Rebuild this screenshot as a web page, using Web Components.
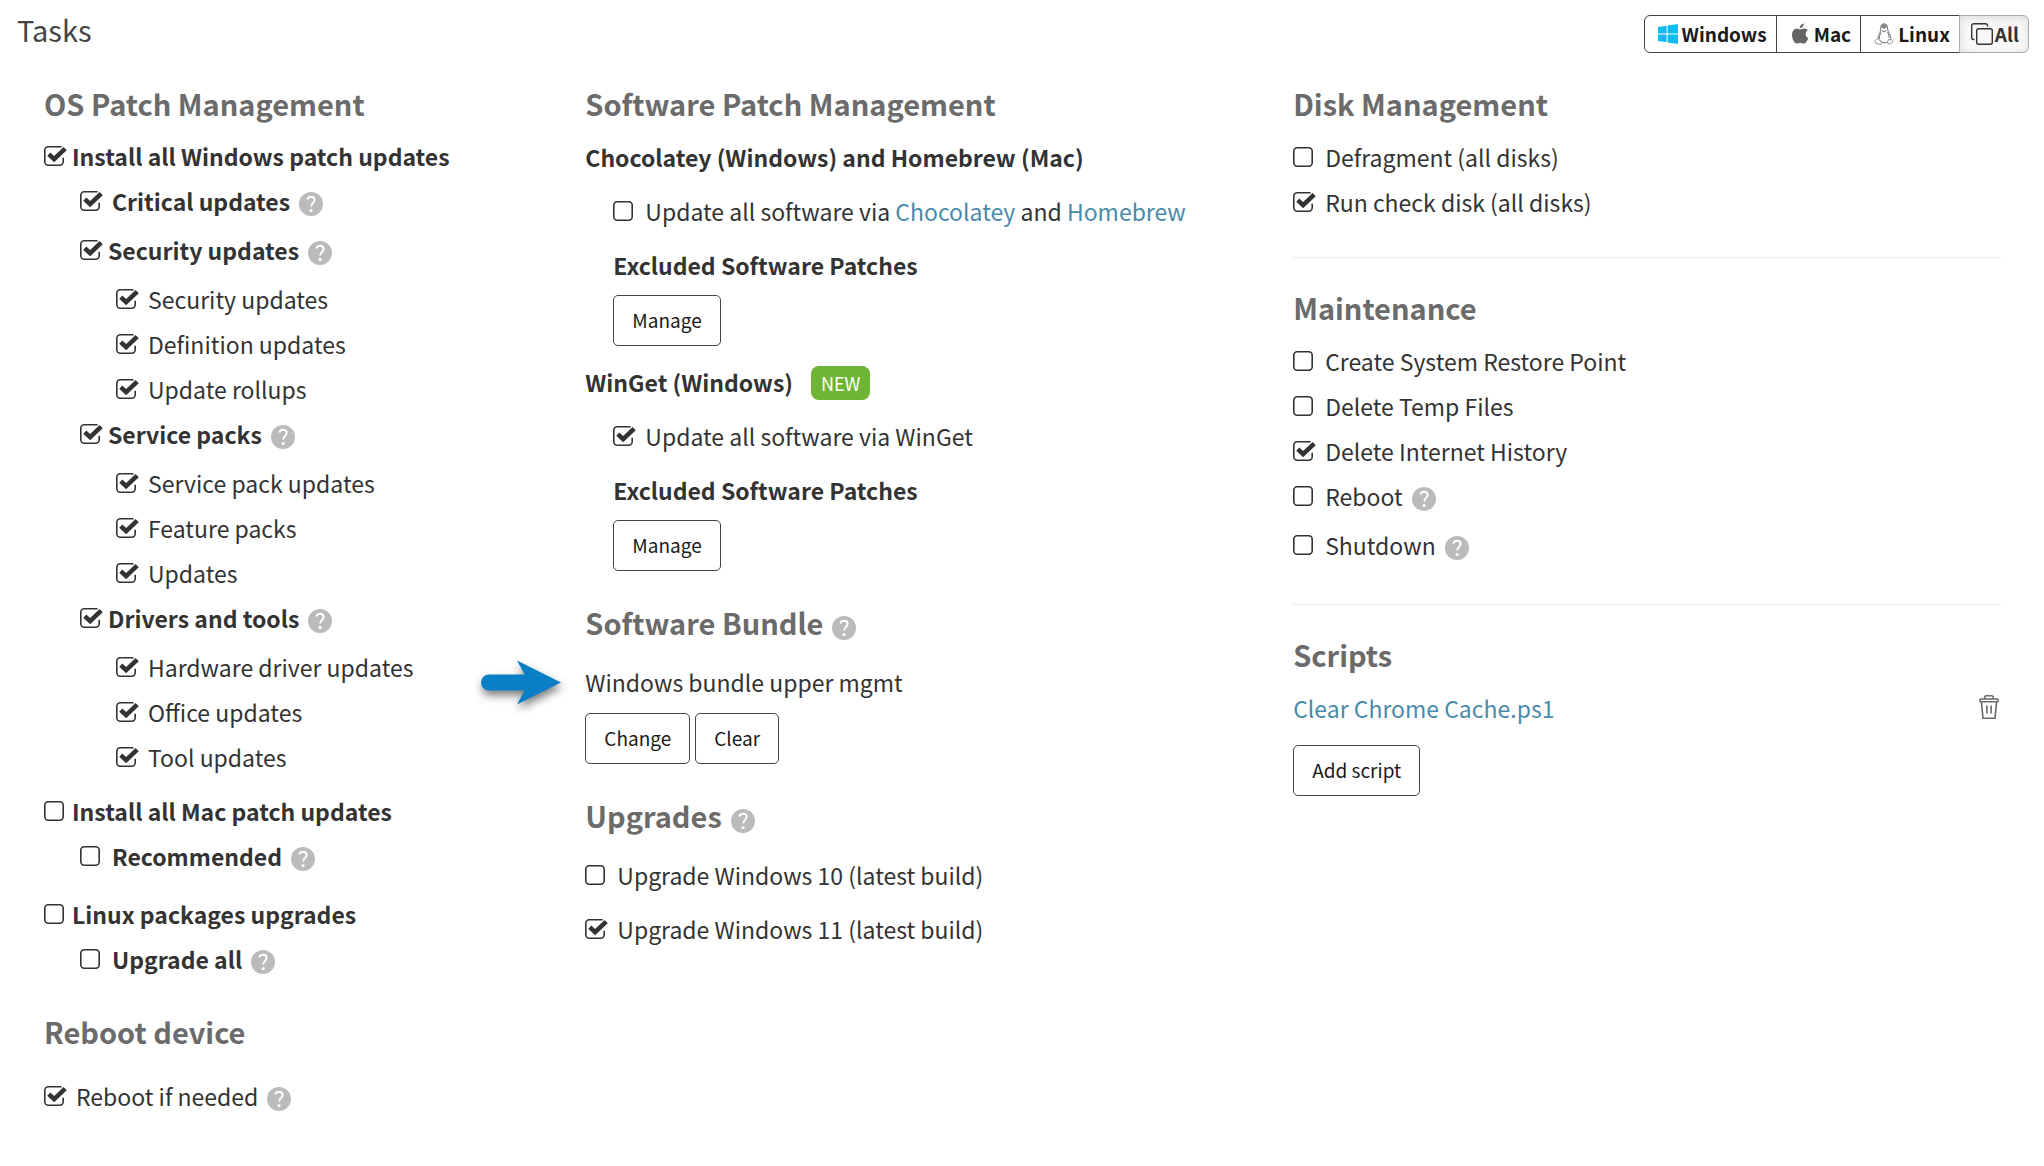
<!DOCTYPE html>
<html lang="en">
<head>
<meta charset="utf-8">
<meta name="viewport" content="width=device-width, initial-scale=1">
<title>Tasks</title>
<style>
    :root {
        --color-text: #333;
        --color-heading: #6b6b6b;
        --color-link: #4a8aaa;
        --color-line: #ebebeb;
        --font-size-sm: 18px;
        --font-size-md: 19px;
        --font-size-base: 23px;
        --font-size-xl: 29px;
        --row: 45px;
    }

    body {
        margin: 0;
        background: #fff;
        color: var(--color-text);
        font-family: "Noto Sans CJK JP", "Noto Sans CJK SC", sans-serif;
        font-size: var(--font-size-base);
        line-height: var(--row);
    }

    a {
        color: var(--color-link);
        text-decoration: none;
    }
</style>
</head>
<body>
<tasks-page></tasks-page>

<script>
class HelpIcon extends HTMLElement {
    connectedCallback() {
        const shadow = this.attachShadow({ mode: "open" });
        shadow.innerHTML = `
            <style>
                :host {
                    display: block;
                    flex: none;
                    margin-top: 13px;
                }

                button {
                    display: block;
                    width: 24px;
                    height: 24px;
                    padding: 0;
                    border: 0;
                    background: none;
                    cursor: pointer;
                }

                svg {
                    display: block;
                }
            </style>

            <button type="button" aria-label="Help">
                <svg width="24" height="24" viewBox="0 0 24 24" fill="none">
                    <circle cx="12" cy="12" r="12" fill="#bbb"/>
                    <path d="M8.3 7.6C8.8 5.6 10.2 4.8 12 4.8c2.1 0 3.6 1.2 3.6 3.2 0 2.7-3.4 3.1-3.4 6.6" stroke="#fff" stroke-width="2"/>
                    <circle cx="12.1" cy="18.6" r="1.6" fill="#fff"/>
                </svg>
            </button>
        `;
    }
}

class TaskCheck extends HTMLElement {
    connectedCallback() {
        const checked = this.hasAttribute("checked") ? "checked" : "";
        const help = this.hasAttribute("help") ? "<help-icon></help-icon>" : "";
        const shadow = this.attachShadow({ mode: "open" });
        shadow.innerHTML = `
            <style>
                :host {
                    display: flex;
                    gap: 9px;
                    min-height: var(--row);
                    --label-gap: 8px;
                }

                :host([help]) {
                    padding-bottom: 4px;
                }

                :host([strong]) {
                    font-weight: 700;
                }

                :host([tight]) {
                    --label-gap: 4px;
                }

                label {
                    display: flex;
                    gap: var(--label-gap);
                    cursor: pointer;
                }

                .box {
                    display: grid;
                    flex: none;
                    width: 24px;
                    height: 20px;
                    margin-top: 12px;
                }

                input,
                svg {
                    grid-area: 1 / 1;
                    width: 24px;
                    height: 20px;
                    margin: 0;
                }

                input {
                    appearance: none;
                }

                svg {
                    overflow: visible;
                    pointer-events: none;
                }

                .on,
                input:checked ~ .off {
                    display: none;
                }

                input:checked ~ .on {
                    display: block;
                }
            </style>

            <label>
                <span class="box">
                    <input type="checkbox" ${checked}>
                    <svg class="off" viewBox="0 0 24 20" fill="none" stroke="#333" stroke-width="1.6">
                        <rect x="0.8" y="0.8" width="18.4" height="18.4" rx="3.4"/>
                    </svg>
                    <svg class="on" viewBox="0 0 24 20" fill="none" stroke="#333">
                        <path d="M17.6.8H4.2A3.4 3.4 0 0 0 .8 4.2v11.6a3.4 3.4 0 0 0 3.4 3.4h11.6a3.4 3.4 0 0 0 3.4-3.4v-4" stroke-width="1.6"/>
                        <path d="M4.8 8.2l5.3 5L21.2 2.6" stroke-width="4.6"/>
                    </svg>
                </span>
                <span><slot></slot></span>
            </label>
            ${help}
        `;
    }
}

class TaskHeading extends HTMLElement {
    connectedCallback() {
        const help = this.hasAttribute("help") ? "<help-icon></help-icon>" : "";
        const shadow = this.attachShadow({ mode: "open" });
        shadow.innerHTML = `
            <style>
                :host {
                    display: flex;
                    gap: 9px;
                    margin-bottom: 9px;
                    color: var(--color-heading);
                }

                :host([help]) {
                    margin-bottom: 15px;
                }

                h2 {
                    margin: 0;
                    font-size: var(--font-size-xl);
                    font-weight: 700;
                }

                help-icon {
                    margin-top: 16px;
                }
            </style>

            <h2><slot></slot></h2>
            ${help}
        `;
    }
}

class TaskButton extends HTMLElement {
    connectedCallback() {
        const shadow = this.attachShadow({ mode: "open" });
        shadow.innerHTML = `
            <style>
                :host {
                    display: block;
                }

                button {
                    display: block;
                    height: 51px;
                    padding: 0 18px 2px;
                    border: 1px solid #444;
                    border-radius: 5px;
                    background: #fff;
                    color: #1a1a1a;
                    font-family: inherit;
                    font-size: var(--font-size-md);
                    cursor: pointer;
                }
            </style>

            <button type="button"><slot></slot></button>
        `;
    }
}

class PlatformFilter extends HTMLElement {
    connectedCallback() {
        const shadow = this.attachShadow({ mode: "open" });
        shadow.innerHTML = `
            <style>
                :host {
                    display: flex;
                    height: 38px;
                }

                button {
                    display: flex;
                    align-items: center;
                    gap: 4px;
                    margin-left: -1px;
                    padding: 0 9px 0 13px;
                    border: 1px solid #444;
                    background: #fff;
                    color: #1a1a1a;
                    font: inherit;
                    font-size: var(--font-size-md);
                    font-weight: 700;
                    line-height: 34px;
                    cursor: pointer;
                }

                button:first-of-type {
                    margin-left: 0;
                    border-radius: 6px 0 0 6px;
                }

                button:last-of-type {
                    gap: 2px;
                    padding-left: 11px;
                    border-color: #aaa;
                    border-radius: 0 6px 6px 0;
                    background: #f8f8f8;
                    box-shadow: inset 0 2px 8px rgba(0 0 0 / 0.12);
                    color: #333;
                }

                svg {
                    display: block;
                    flex: none;
                }
            </style>

            <button type="button">
                <svg width="20" height="20" viewBox="0 0 20 20" fill="#0fbcf0">
                    <path d="M0 3l8.6-1.2v7.7H0zM9.6 1.6L20 0v9.5H9.6zM0 10.5h8.6v7.7L0 17zM9.6 10.5H20V20L9.6 18.4z"/>
                </svg>
                Windows
            </button>
            <button type="button">
                <svg width="20" height="22" viewBox="0 0 20 22" fill="#666">
                    <path d="M13.7.5c.2 2.4-1.7 4.7-4 4.7C9.5 3 11.4.8 13.7.5z"/>
                    <path d="M10 6.5c1 0 2.3-1.1 4.2-1 1.3.1 2.7.7 3.5 1.9-3.1 2-2.6 6.2.6 7.5-.8 2.4-2.6 5.7-4.6 5.7-1.3 0-1.9-.8-3.4-.8s-2.2.8-3.4.8C4.5 20.6 2 16 2 12.3c0-4.2 2.4-6.7 4.9-6.8 1.3 0 2.3 1 3.1 1z"/>
                </svg>
                Mac
            </button>
            <button type="button">
                <svg width="20" height="22" viewBox="0 0 20 22" fill="none" stroke="#777">
                    <path d="M6.6 6.6C6.8 3 7.2.8 10 .8s3.5 2.3 3.6 5.2c.1 3 3.2 5.5 3.2 9.5l-1.2 2.3c-1.7 1.6-4.5 2.7-7.6 1.5L4 16c-.3-3.5 2.5-5.6 2.6-9.4z" fill="#fff"/>
                    <path d="M6.8 5C7 2.5 7.6.8 10 .8s3.2 1.7 3.4 4L12 4.5l-2 1.7L8 4.5z" fill="#888" stroke="none"/>
                    <path d="M7.7 7.5l2.3 1.2 2.5-1.2"/>
                    <path d="M7 9.500c-1 2-2 4-1.5 6.5M13.5 9c1 2 1.7 4 1.5 6"/>
                    <path d="M4 15.5l3.6 4c.2 1.6-1.2 2-2.6 1.6l-3.6-1c-1-.5.2-2 0-3.1 1 .1 1.600-1.500 2.600-1.500zM15 16c.8 1.200 1.800 1 2.500.4l1.700 2.100c-1.500.8-2.600 2.700-4 2.700-1.700 0-1.700-2-1.100-3.700z" fill="#fff" stroke-width=".8"/>
                </svg>
                Linux
            </button>
            <button type="button" aria-pressed="true">
                <svg width="22" height="22" viewBox="0 0 22 22" fill="none" stroke="#333" stroke-width="1.4">
                    <rect x="5.7" y="5.7" width="15.6" height="15.6" rx="2"/>
                    <path d="M16.5 3.500v-.8a2 2 0 0 0-2-2H2.700a2 2 0 0 0-2 2v11.800a2 2 0 0 0 2 2h.8"/>
                </svg>
                All
            </button>
        `;
    }
}

class OsPatchColumn extends HTMLElement {
    connectedCallback() {
        const shadow = this.attachShadow({ mode: "open" });
        shadow.innerHTML = `
            <style>
                :host {
                    display: block;
                }

                task-heading {
                    margin-bottom: 8px;
                }

                .group {
                    margin-bottom: 9px;
                }

                .indent {
                    padding-left: 36px;
                }

                .reboot {
                    margin-top: 23px;
                }

                .reboot task-heading {
                    margin-bottom: 20px;
                }
            </style>

            <task-heading>OS Patch Management</task-heading>
            <div class="group">
                <task-check checked strong tight>Install all Windows patch updates</task-check>
                <div class="indent">
                    <task-check checked strong help>Critical updates</task-check>
                    <task-check checked strong tight help>Security updates</task-check>
                    <div class="indent">
                        <task-check checked>Security updates</task-check>
                        <task-check checked>Definition updates</task-check>
                        <task-check checked>Update rollups</task-check>
                    </div>
                    <task-check checked strong tight help>Service packs</task-check>
                    <div class="indent">
                        <task-check checked>Service pack updates</task-check>
                        <task-check checked>Feature packs</task-check>
                        <task-check checked>Updates</task-check>
                    </div>
                    <task-check checked strong tight help>Drivers and tools</task-check>
                    <div class="indent">
                        <task-check checked>Hardware driver updates</task-check>
                        <task-check checked>Office updates</task-check>
                        <task-check checked>Tool updates</task-check>
                    </div>
                </div>
            </div>
            <div class="group">
                <task-check strong tight>Install all Mac patch updates</task-check>
                <div class="indent">
                    <task-check strong help>Recommended</task-check>
                </div>
            </div>
            <div>
                <task-check strong tight>Linux packages upgrades</task-check>
                <div class="indent">
                    <task-check strong help>Upgrade all</task-check>
                </div>
            </div>
            <div class="reboot">
                <task-heading>Reboot device</task-heading>
                <task-check checked help>Reboot if needed</task-check>
            </div>
        `;
    }
}

class SoftwareColumn extends HTMLElement {
    connectedCallback() {
        const shadow = this.attachShadow({ mode: "open" });
        shadow.innerHTML = `
            <style>
                :host {
                    display: block;
                }

                a {
                    color: var(--color-link);
                    text-decoration: none;
                }

                h3,
                h4 {
                    display: flex;
                    align-items: center;
                    gap: 18px;
                    margin: 0;
                    font-size: inherit;
                    font-weight: 700;
                }

                .source {
                    padding: 9px 0 14px 28px;
                }

                .source task-check {
                    margin-bottom: 9px;
                }

                .source task-button {
                    margin-top: 7px;
                }

                .badge {
                    padding: 0 10px;
                    border-radius: 8px;
                    background: #6eb536;
                    color: #fff;
                    font-size: var(--font-size-sm);
                    font-weight: 400;
                    line-height: 34px;
                }

                .section {
                    margin-top: 29px;
                }

                .source + .section {
                    margin-top: 15px;
                }

                .bundle {
                    position: relative;
                }

                /* callout arrow hangs in the space left of the column */
                .arrow {
                    position: absolute;
                    top: 0;
                    left: -104px;
                    overflow: visible;
                    filter: drop-shadow(1px 5px 4px rgba(0 0 0 / 0.5));
                }

                .buttons {
                    display: flex;
                    gap: 5px;
                    margin-top: 8px;
                }

                .upgrades {
                    display: grid;
                    gap: 9px;
                }
            </style>

            <task-heading>Software Patch Management</task-heading>
            <h3>Chocolatey (Windows) and Homebrew (Mac)</h3>
            <div class="source">
                <task-check>Update all software via <a href="#chocolatey">Chocolatey</a> and <a href="#homebrew">Homebrew</a></task-check>
                <h4>Excluded Software Patches</h4>
                <task-button>Manage</task-button>
            </div>
            <h3>WinGet (Windows) <span class="badge">NEW</span></h3>
            <div class="source">
                <task-check checked>Update all software via WinGet</task-check>
                <h4>Excluded Software Patches</h4>
                <task-button>Manage</task-button>
            </div>
            <div class="section">
                <task-heading help>Software Bundle</task-heading>
                <div class="bundle">
                    <svg class="arrow" width="80" height="45" viewBox="0 0 80 45" fill="#0a7fc6">
                        <path d="M8 14.500h35.500L36 .5l44 22-44 22 7.500-14H8a8 8 0 0 1 0-16z"/>
                    </svg>
                    Windows bundle upper mgmt
                </div>
                <div class="buttons">
                    <task-button>Change</task-button>
                    <task-button>Clear</task-button>
                </div>
            </div>
            <div class="section">
                <task-heading help>Upgrades</task-heading>
                <div class="upgrades">
                    <task-check>Upgrade Windows 10 (latest build)</task-check>
                    <task-check checked>Upgrade Windows 11 (latest build)</task-check>
                </div>
            </div>
        `;
    }
}

class DeviceColumn extends HTMLElement {
    connectedCallback() {
        const shadow = this.attachShadow({ mode: "open" });
        shadow.innerHTML = `
            <style>
                :host {
                    display: block;
                }

                hr {
                    height: 1px;
                    margin: 32px 0 27px;
                    border: 0;
                    background: var(--color-line);
                }

                a {
                    color: var(--color-link);
                    text-decoration: none;
                }

                .script {
                    display: flex;
                    align-items: center;
                    justify-content: space-between;
                    margin-bottom: 14px;
                    padding-right: 2px;
                }

                .trash {
                    padding: 0 0 4px;
                    border: 0;
                    background: none;
                    cursor: pointer;
                }

                .trash svg {
                    display: block;
                }

                task-button {
                    width: fit-content;
                }
            </style>

            <task-heading>Disk Management</task-heading>
            <task-check>Defragment (all disks)</task-check>
            <task-check checked>Run check disk (all disks)</task-check>
            <hr>
            <task-heading>Maintenance</task-heading>
            <task-check>Create System Restore Point</task-check>
            <task-check>Delete Temp Files</task-check>
            <task-check checked>Delete Internet History</task-check>
            <task-check help>Reboot</task-check>
            <task-check help>Shutdown</task-check>
            <hr>
            <task-heading>Scripts</task-heading>
            <div class="script">
                <a href="#script">Clear Chrome Cache.ps1</a>
                <button class="trash" type="button" aria-label="Delete script">
                    <svg width="20" height="24" viewBox="0 0 20 24" fill="none" stroke="#6b6b6b" stroke-width="1.6">
                        <path d="M5.7 4V2.5A1.7 1.7 0 0 1 7.4.8h5.2a1.7 1.7 0 0 1 1.7 1.7V4"/>
                        <rect x=".8" y="4" width="18.4" height="2.8" rx="1.2"/>
                        <path d="M2.4 6.8L4 23.2h12l1.6-16.4M7.9 10.5v8M12.1 10.5v8"/>
                    </svg>
                </button>
            </div>
            <task-button>Add script</task-button>
        `;
    }
}

class TasksPage extends HTMLElement {
    connectedCallback() {
        const shadow = this.attachShadow({ mode: "open" });
        shadow.innerHTML = `
            <style>
                :host {
                    display: block;
                }

                header {
                    display: flex;
                    justify-content: space-between;
                    padding: 7px 15px 0 17px;
                }

                h1 {
                    margin: 0;
                    color: #444;
                    font-size: var(--font-size-xl);
                    font-weight: 400;
                }

                platform-filter {
                    margin-top: 8px;
                }

                main {
                    display: grid;
                    grid-template-columns: 13fr 17fr 17fr;
                    padding: 28px 43px 24px 44px;
                }
            </style>

            <header>
                <h1>Tasks</h1>
                <platform-filter></platform-filter>
            </header>
            <main>
                <os-patch-column></os-patch-column>
                <software-column></software-column>
                <device-column></device-column>
            </main>
        `;
    }
}

customElements.define("help-icon", HelpIcon);
customElements.define("task-check", TaskCheck);
customElements.define("task-heading", TaskHeading);
customElements.define("task-button", TaskButton);
customElements.define("platform-filter", PlatformFilter);
customElements.define("os-patch-column", OsPatchColumn);
customElements.define("software-column", SoftwareColumn);
customElements.define("device-column", DeviceColumn);
customElements.define("tasks-page", TasksPage);
</script>
</body>
</html>
